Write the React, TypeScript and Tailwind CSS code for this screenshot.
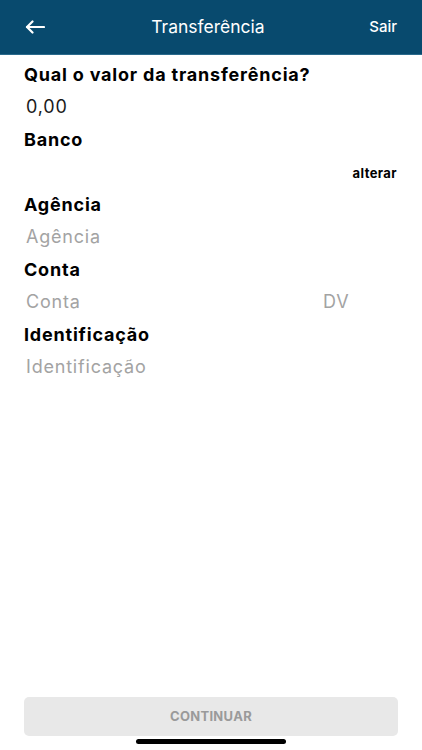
import React from "react";

export default function App() {
  const font = { fontFamily: "Inter, 'Noto Sans', sans-serif" };
  const label = "h-[32.5px] flex items-center px-6 text-[18px] font-bold text-black tracking-[0.8px]";
  const ph = "h-[32.5px] flex items-center px-[26px] text-[18px] text-[#a3a3a3] tracking-[0.8px]";
  return (
    <div className="w-[422px] h-[750px] bg-white flex flex-col relative overflow-hidden" style={font}>
      <div className="h-[55px] bg-[#084a6e] flex items-center justify-between px-[25px] border-b border-[#2a6a8c] relative">
        <svg width="20" height="14" viewBox="0 0 20 14" fill="none" stroke="white" strokeWidth="2.2" strokeLinecap="round" strokeLinejoin="round">
          <path d="M19 7H2" />
          <path d="M7.5 1.5L2 7l5.5 5.5" />
        </svg>
        <span className="text-white text-[17.5px] absolute left-0 right-[6px] text-center pointer-events-none">Transferência</span>
        <span className="text-white text-[15px] font-medium">Sair</span>
      </div>
      <div className="flex flex-col pt-[3px]">
        <div className={label}>Qual o valor da transferência?</div>
        <div className="h-[32.5px] flex items-center px-[26px] text-[18px] text-[#1a1a1a] tracking-[0.8px]">0,00</div>
        <div className={label}>Banco</div>
        <div className="h-[32.5px] flex items-center justify-end px-[25px] text-[13px] font-bold text-black tracking-[0.4px] pt-1">alterar</div>
        <div className={label}>Agência</div>
        <div className={ph}>Agência</div>
        <div className={label}>Conta</div>
        <div className="h-[32.5px] flex items-center pl-[26px] text-[18px] text-[#a3a3a3] tracking-[0.8px]">
          <span className="w-[297px]">Conta</span>
          <span>DV</span>
        </div>
        <div className={label}>Identificação</div>
        <div className={ph}>Identificação</div>
      </div>
      <div className="flex-1" />
      <div className="px-6 pb-[14px]">
        <div className="h-[39px] rounded-[5px] bg-[#e8e8e8] flex items-center justify-center text-[13px] font-bold text-[#9a9a9a] tracking-[0.3px]">
          CONTINUAR
        </div>
      </div>
      <div className="absolute left-[136px] bottom-[6px] w-[150px] h-[5px] rounded-full bg-black" />
    </div>
  );
}
